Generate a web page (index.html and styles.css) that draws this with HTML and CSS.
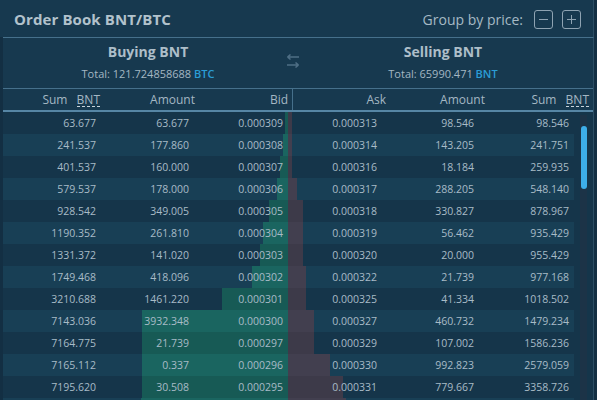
FILE: index.html
```html
<!DOCTYPE html>
<html>
<head>
<meta charset="utf-8">
<link rel="stylesheet" href="styles.css">
</head>
<body>
<div class="app">
  <header class="top">
    <h1 class="title">Order Book BNT/BTC</h1>
    <div class="group">
      <span class="group-label">Group by price:</span>
      <button class="gbtn" aria-label="minus"><svg width="11" height="11" viewBox="0 0 11 11"><path d="M1 5.5H10" stroke="#8ea3b2" stroke-width="1"/></svg></button>
      <button class="gbtn" aria-label="plus"><svg width="11" height="11" viewBox="0 0 11 11"><path d="M1 5.5H10M5.5 1V10" stroke="#8ea3b2" stroke-width="1"/></svg></button>
    </div>
  </header>
  <section class="book">
    <div class="sides">
      <div class="side side-buy">
        <div class="side-title">Buying BNT</div>
        <div class="side-total">Total: 121.724858688 <span class="cur">BTC</span></div>
      </div>
      <div class="side side-sell">
        <div class="side-title">Selling BNT</div>
        <div class="side-total">Total: 65990.471 <span class="cur">BNT</span></div>
      </div>
      <svg class="swap" width="14" height="16" viewBox="0 0 14 16">
        <path d="M1.5 4H13M1.5 4L4.5 1.5M1.5 4L4.5 6.5" stroke="#4f6f85" stroke-width="1.6" fill="none"/>
        <path d="M1 12H12.5M12.5 12L9.5 9.5M12.5 12L9.5 14.5" stroke="#4f6f85" stroke-width="1.6" fill="none"/>
      </svg>
    </div>
    <div class="heads">
      <div class="head head-buy">
        <span class="hc">Sum <abbr class="unit">BNT</abbr></span>
        <span class="hc">Amount</span>
        <span class="hc">Bid</span>
      </div>
      <div class="head head-sell">
        <span class="hc">Ask</span>
        <span class="hc">Amount</span>
        <span class="hc">Sum <abbr class="unit">BNT</abbr></span>
      </div>
    </div>
    <div class="body">
      <div class="rows bids">
        <div class="row" style="--w:3px"><span>63.677</span><span>63.677</span><span>0.000309</span></div>
        <div class="row" style="--w:5px"><span>241.537</span><span>177.860</span><span>0.000308</span></div>
        <div class="row" style="--w:8px"><span>401.537</span><span>160.000</span><span>0.000307</span></div>
        <div class="row" style="--w:11px"><span>579.537</span><span>178.000</span><span>0.000306</span></div>
        <div class="row" style="--w:19px"><span>928.542</span><span>349.005</span><span>0.000305</span></div>
        <div class="row" style="--w:25px"><span>1190.352</span><span>261.810</span><span>0.000304</span></div>
        <div class="row" style="--w:28px"><span>1331.372</span><span>141.020</span><span>0.000303</span></div>
        <div class="row" style="--w:36px"><span>1749.468</span><span>418.096</span><span>0.000302</span></div>
        <div class="row" style="--w:66px"><span>3210.688</span><span>1461.220</span><span>0.000301</span></div>
        <div class="row" style="--w:146px"><span>7143.036</span><span>3932.348</span><span>0.000300</span></div>
        <div class="row" style="--w:146px"><span>7164.775</span><span>21.739</span><span>0.000297</span></div>
        <div class="row" style="--w:146px"><span>7165.112</span><span>0.337</span><span>0.000296</span></div>
        <div class="row" style="--w:146px"><span>7195.620</span><span>30.508</span><span>0.000295</span></div>
        <div class="row" style="--w:147px"></div>
      </div>
      <div class="rows asks">
        <div class="row" style="--w:4px"><span>0.000313</span><span>98.546</span><span>98.546</span></div>
        <div class="row" style="--w:4px"><span>0.000314</span><span>143.205</span><span>241.751</span></div>
        <div class="row" style="--w:4px"><span>0.000316</span><span>18.184</span><span>259.935</span></div>
        <div class="row" style="--w:9px"><span>0.000317</span><span>288.205</span><span>548.140</span></div>
        <div class="row" style="--w:15px"><span>0.000318</span><span>330.827</span><span>878.967</span></div>
        <div class="row" style="--w:15px"><span>0.000319</span><span>56.462</span><span>935.429</span></div>
        <div class="row" style="--w:15px"><span>0.000320</span><span>20.000</span><span>955.429</span></div>
        <div class="row" style="--w:18px"><span>0.000322</span><span>21.739</span><span>977.168</span></div>
        <div class="row" style="--w:18px"><span>0.000325</span><span>41.334</span><span>1018.502</span></div>
        <div class="row" style="--w:26px"><span>0.000327</span><span>460.732</span><span>1479.234</span></div>
        <div class="row" style="--w:26px"><span>0.000329</span><span>107.002</span><span>1586.236</span></div>
        <div class="row" style="--w:42px"><span>0.000330</span><span>992.823</span><span>2579.059</span></div>
        <div class="row" style="--w:55px"><span>0.000331</span><span>779.667</span><span>3358.726</span></div>
        <div class="row" style="--w:58px"></div>
      </div>
      <div class="gutter"><div class="track"><div class="thumb"></div></div></div>
    </div>
  </section>
</div>
</body>
</html>
```
FILE: styles.css
```css
* { box-sizing: border-box; }
html, body { margin: 0; padding: 0; }
body {
  width: 597px;
  height: 400px;
  overflow: hidden;
  background: #132f43;
  font-family: "Open Sans", "Noto Sans", sans-serif;
  color: #a9bcc8;
}
.app {
  width: 597px;
  height: 400px;
  display: flex;
  flex-direction: column;
  overflow: hidden;
}
.top {
  height: 37px;
  flex: none;
  display: flex;
  align-items: center;
  justify-content: space-between;
  padding: 0 12px 0 14px;
  background: #17394f;
  margin-right: 3px;
  border-right: 1px solid #2c4e64;
}
.title {
  margin: 0;
  font-size: 15px;
  font-weight: 700;
  color: #b2c2cc;
  letter-spacing: 0.1px;
}
.group {
  display: flex;
  align-items: center;
  padding-top: 1px;
}
.group-label {
  font-size: 14px;
  color: #a6b9c5;
  margin-right: 11px;
}
.gbtn {
  width: 19px;
  height: 19px;
  padding: 0;
  margin: 0 0 0 9px;
  border: 1px solid #8ea3b2;
  border-radius: 3px;
  background: transparent;
  display: flex;
  align-items: center;
  justify-content: center;
}
.gbtn:first-of-type { margin-left: 0; }
.book {
  flex: 1;
  display: flex;
  flex-direction: column;
  margin: 0 3px 0 3px;
  background: #17394f;
  border-top: 1px solid #46708b;
  border-right: 1px solid #2c4e64;
  min-height: 0;
}
.sides {
  position: relative;
  display: flex;
  height: 51px;
  border-bottom: 1px solid #46708b;
  flex: none;
}
.side {
  padding-top: 4px;
  text-align: center;
}
.side-buy { width: 290px; }
.side-sell { flex: 1; }
.side-title {
  font-size: 14px;
  font-weight: 700;
  line-height: 20px;
  color: #adbec9;
}
.side-total {
  font-size: 11px;
  line-height: 16px;
  margin-top: 4px;
  color: #a4b7c3;
}
.cur {
  color: #2b9dd6;
  font-weight: 600;
}
.swap {
  position: absolute;
  left: 283px;
  top: 15px;
}
.heads {
  display: flex;
  height: 23px;
  flex: none;
  border-bottom: 2px solid #5686a5;
}
.head {
  display: grid;
  font-size: 12px;
  line-height: 21px;
  color: #a4b7c3;
}
.head-buy {
  width: 290px;
  grid-template-columns: 97px 95px 93px;
  padding-right: 5px;
  border-right: 1px solid #46708b;
}
.head-sell {
  flex: 1;
  grid-template-columns: 93px 99px 104px;
  padding-right: 2px;
}
.hc { text-align: right; white-space: nowrap; }
.unit {
  text-decoration: none;
  border-bottom: 1px dashed #c8d4dc;
  margin-left: 6px;
  line-height: 13px;
  display: inline-block;
}
.body {
  flex: 1;
  display: flex;
  background: #15354a;
  min-height: 0;
  overflow: hidden;
}
.rows { display: flex; flex-direction: column; }
.bids { width: 285px; }
.asks { width: 286px; }
.row {
  display: grid;
  height: 22px;
  flex: none;
  font-size: 10.5px;
  line-height: 22px;
  color: #a8bbc7;
  --bg: #15354a;
  --bar: #175a55;
  background-color: var(--bg);
}
.row:nth-child(even) {
  --bg: #183f55;
  --bar: #1a6560;
}
.row span { text-align: right; white-space: nowrap; }
.bids .row {
  grid-template-columns: 93px 93px 94px;
  padding-right: 5px;
  background-image: linear-gradient(to left, var(--bar) var(--w), transparent var(--w));
}
.asks .row {
  --bar: #3d3a49;
  grid-template-columns: 89px 97px 95px;
  padding-right: 5px;
  background-image: linear-gradient(to right, var(--bar) var(--w), transparent var(--w));
}
.asks .row:nth-child(even) { --bar: #423f4f; }
.gutter {
  flex: 1;
  padding: 3px 0 0 6px;
}
.track {
  width: 7px;
  height: 100%;
  background: #1c3347;
  padding: 11px 0 0 1px;
}
.thumb {
  width: 6px;
  height: 63px;
  border-radius: 3px;
  background: #3daee9;
}
```
